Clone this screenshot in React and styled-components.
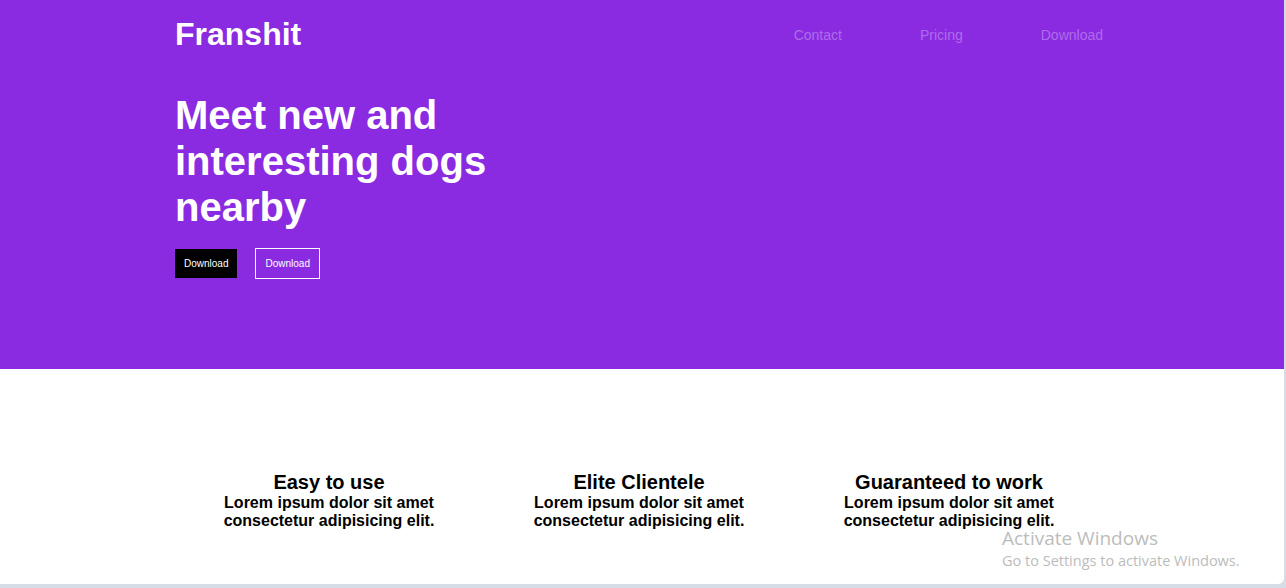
import styled, { createGlobalStyle } from "styled-components";

const GlobalStyle = createGlobalStyle`
  html {
    background: #d6dde6;
  }
  body {
    margin: 0;
    font-family: "Liberation Sans", Arial, sans-serif;
  }
`;

const Frame = styled.div`
  width: 1284px;
  height: 584px;
  background: #ffffff;
  overflow: hidden;
  border-bottom-right-radius: 6px;
  position: relative;
`;

const Hero = styled.section`
  background: #8a2be2;
  height: 369px;
  box-sizing: border-box;
  padding-top: 14px;
`;

const Container = styled.div`
  width: 930px;
  margin-left: ${(p) => p.$left || 175}px;
`;

const Header = styled.header`
  display: flex;
  align-items: flex-start;
  justify-content: space-between;
`;

const Brand = styled.h2`
  margin: 2px 0 0;
  font-size: 32px;
  font-weight: bold;
  color: #ffffff;
  line-height: 37px;
`;

const Nav = styled.nav`
  display: flex;
  gap: 78px;
  padding-top: 13px;
  padding-right: 2px;
`;

const NavLink = styled.a`
  font-size: 14px;
  line-height: 16px;
  color: #ae6bea;
  text-decoration: none;
`;

const Title = styled.h1`
  margin: 39px 0 0;
  max-width: 400px;
  font-size: 40px;
  line-height: 46px;
  font-weight: bold;
  color: #ffffff;
`;

const Actions = styled.div`
  display: flex;
  align-items: center;
  gap: 18px;
  margin-top: 18px;
`;

const Button = styled.button`
  font-family: "Liberation Sans", Arial, sans-serif;
  font-size: 10px;
  line-height: 11px;
  padding: 9px;
  color: #ffffff;
  cursor: pointer;
  background: ${(p) => (p.$outline ? "transparent" : "#000000")};
  border: ${(p) => (p.$outline ? "1px solid #ffffff" : "0")};
`;

const Features = styled.section`
  padding-top: 102px;
`;

const FeatureRow = styled.div`
  display: grid;
  grid-template-columns: repeat(3, 310px);
`;

const Feature = styled.div`
  text-align: center;
  padding: 0 25px;
`;

const FeatureTitle = styled.h3`
  margin: 0;
  font-size: 20px;
  line-height: 23px;
  font-weight: bold;
  color: #000000;
`;

const FeatureText = styled.p`
  margin: 0;
  font-size: 16px;
  line-height: 18px;
  font-weight: bold;
  color: #000000;
`;

const Watermark = styled.div`
  position: absolute;
  left: 1002px;
  top: 526px;
  font-family: "Open Sans", "Noto Sans", sans-serif;
  color: #bcbcbc;
`;

const WatermarkTitle = styled.div`
  font-size: 19px;
  line-height: 24px;
`;

const WatermarkText = styled.div`
  font-size: 14.5px;
  line-height: 20px;
  margin-top: 1px;
`;

const features = [
  { title: "Easy to use" },
  { title: "Elite Clientele" },
  { title: "Guaranteed to work" },
];

export default function App() {
  return (
    <Frame>
      <GlobalStyle />
      <Hero>
        <Container>
          <Header>
            <Brand>Franshit</Brand>
            <Nav>
              <NavLink href="#">Contact</NavLink>
              <NavLink href="#">Pricing</NavLink>
              <NavLink href="#">Download</NavLink>
            </Nav>
          </Header>
          <Title>Meet new and interesting dogs nearby</Title>
          <Actions>
            <Button>Download</Button>
            <Button $outline>Download</Button>
          </Actions>
        </Container>
      </Hero>
      <Features>
        <Container $left={174}>
          <FeatureRow>
            {features.map((f) => (
              <Feature key={f.title}>
                <FeatureTitle>{f.title}</FeatureTitle>
                <FeatureText>
                  Lorem ipsum dolor sit amet consectetur adipisicing elit.
                </FeatureText>
              </Feature>
            ))}
          </FeatureRow>
        </Container>
      </Features>
      <Watermark>
        <WatermarkTitle>Activate Windows</WatermarkTitle>
        <WatermarkText>Go to Settings to activate Windows.</WatermarkText>
      </Watermark>
    </Frame>
  );
}
